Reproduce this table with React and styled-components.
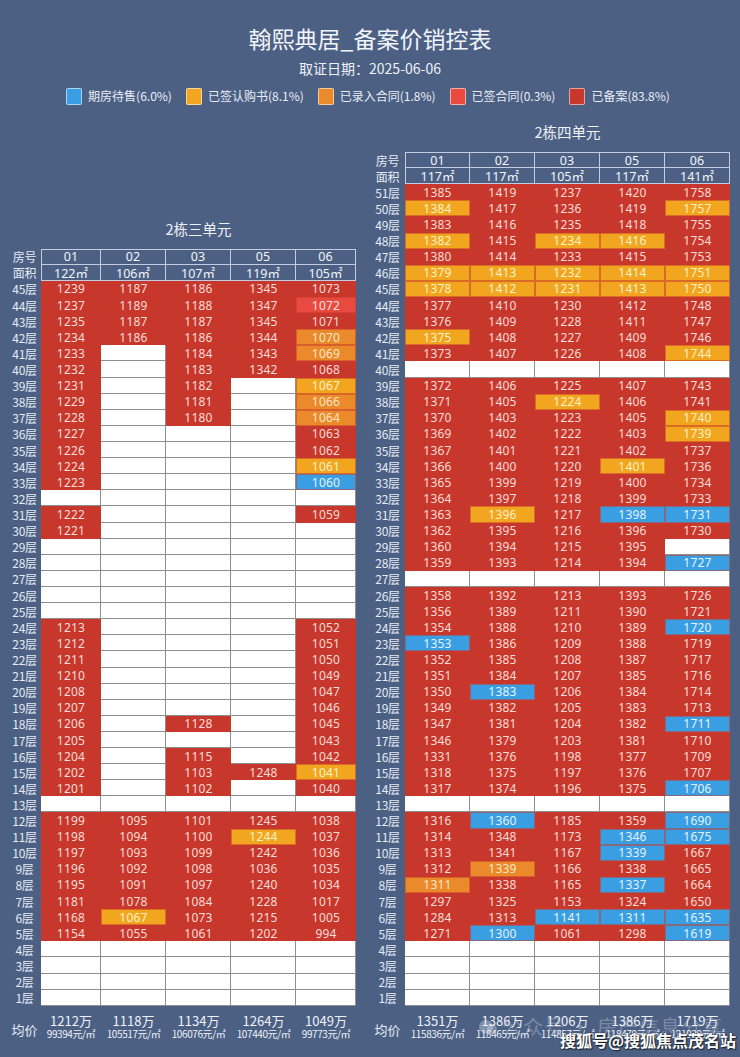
import React from 'react';
import styled, { createGlobalStyle } from 'styled-components';

const GlobalStyle = createGlobalStyle`
  html, body {
    margin: 0;
    padding: 0;
    background: #4c6084;
  }
  body {
    font-family: "Noto Sans", "Noto Sans CJK SC", sans-serif;
  }
`;

const COLORS = {
  sold: '#c8372c',
  sub: '#f2a51f',
  entry: '#ea8a2b',
  signed: '#e94a40',
  avail: '#3a9fe2',
};

const TEXT = {
  sold: '#f8ddd6',
  sub: '#fff3c4',
  entry: '#ffe6c4',
  signed: '#ffe0dc',
  avail: '#e4f2ff',
};

const SUFFIX = { y: 'sub', o: 'entry', r: 'signed', b: 'avail' };

const LEGEND = [
  { key: 'avail', label: '期房待售(6.0%)' },
  { key: 'sub', label: '已签认购书(8.1%)' },
  { key: 'entry', label: '已录入合同(1.8%)' },
  { key: 'signed', label: '已签合同(0.3%)' },
  { key: 'sold', label: '已备案(83.8%)' },
];

// 2栋三单元, 45层 -> 1层
const LEFT = [
  '1239 1187 1186 1345 1073',
  '1237 1189 1188 1347 1072r',
  '1235 1187 1187 1345 1071',
  '1234 1186 1186 1344 1070o',
  '1233 - 1184 1343 1069o',
  '1232 - 1183 1342 1068',
  '1231 - 1182 - 1067y',
  '1229 - 1181 - 1066o',
  '1228 - 1180 - 1064o',
  '1227 - - - 1063',
  '1226 - - - 1062',
  '1224 - - - 1061y',
  '1223 - - - 1060b',
  '- - - - -',
  '1222 - - - 1059',
  '1221 - - - -',
  '- - - - -',
  '- - - - -',
  '- - - - -',
  '- - - - -',
  '- - - - -',
  '1213 - - - 1052',
  '1212 - - - 1051',
  '1211 - - - 1050',
  '1210 - - - 1049',
  '1208 - - - 1047',
  '1207 - - - 1046',
  '1206 - 1128 - 1045',
  '1205 - - - 1043',
  '1204 - 1115 - 1042',
  '1202 - 1103 1248 1041y',
  '1201 - 1102 - 1040',
  '- - - - -',
  '1199 1095 1101 1245 1038',
  '1198 1094 1100 1244y 1037',
  '1197 1093 1099 1242 1036',
  '1196 1092 1098 1036 1035',
  '1195 1091 1097 1240 1034',
  '1181 1078 1084 1228 1017',
  '1168 1067y 1073 1215 1005',
  '1154 1055 1061 1202 994',
  '- - - - -',
  '- - - - -',
  '- - - - -',
  '- - - - -',
];

// 2栋四单元, 51层 -> 1层
const RIGHT = [
  '1385 1419 1237 1420 1758',
  '1384y 1417 1236 1419 1757y',
  '1383 1416 1235 1418 1755',
  '1382y 1415 1234y 1416y 1754',
  '1380 1414 1233 1415 1753',
  '1379y 1413y 1232y 1414y 1751y',
  '1378y 1412y 1231y 1413y 1750y',
  '1377 1410 1230 1412 1748',
  '1376 1409 1228 1411 1747',
  '1375y 1408 1227 1409 1746',
  '1373 1407 1226 1408 1744y',
  '- - - - -',
  '1372 1406 1225 1407 1743',
  '1371 1405 1224y 1406 1741',
  '1370 1403 1223 1405 1740y',
  '1369 1402 1222 1403 1739y',
  '1367 1401 1221 1402 1737',
  '1366 1400 1220 1401y 1736',
  '1365 1399 1219 1400 1734',
  '1364 1397 1218 1399 1733',
  '1363 1396y 1217 1398b 1731b',
  '1362 1395 1216 1396 1730',
  '1360 1394 1215 1395 -',
  '1359 1393 1214 1394 1727b',
  '- - - - -',
  '1358 1392 1213 1393 1726',
  '1356 1389 1211 1390 1721',
  '1354 1388 1210 1389 1720b',
  '1353b 1386 1209 1388 1719',
  '1352 1385 1208 1387 1717',
  '1351 1384 1207 1385 1716',
  '1350 1383b 1206 1384 1714',
  '1349 1382 1205 1383 1713',
  '1347 1381 1204 1382 1711b',
  '1346 1379 1203 1381 1710',
  '1331 1376 1198 1377 1709',
  '1318 1375 1197 1376 1707',
  '1317 1374 1196 1375 1706b',
  '- - - - -',
  '1316 1360b 1185 1359 1690b',
  '1314 1348 1173 1346b 1675b',
  '1313 1341 1167 1339b 1667',
  '1312 1339o 1166 1338 1665',
  '1311o 1338 1165 1337b 1664',
  '1297 1325 1153 1324 1650',
  '1284 1313 1141b 1311b 1635b',
  '1271 1300b 1061 1298 1619b',
  '- - - - -',
  '- - - - -',
  '- - - - -',
  '- - - - -',
];

const BUILDINGS = [
  {
    name: '2栋三单元',
    label: 33,
    widths: [60, 65, 65, 65, 60],
    rooms: ['01', '02', '03', '05', '06'],
    areas: ['122㎡', '106㎡', '107㎡', '119㎡', '105㎡'],
    rows: LEFT,
    avg: [
      ['1212万', '99394元/㎡'],
      ['1118万', '105517元/㎡'],
      ['1134万', '106076元/㎡'],
      ['1264万', '107440元/㎡'],
      ['1049万', '99773元/㎡'],
    ],
  },
  {
    name: '2栋四单元',
    label: 35,
    widths: [65, 65, 65, 65, 65],
    rooms: ['01', '02', '03', '05', '06'],
    areas: ['117㎡', '117㎡', '105㎡', '117㎡', '141㎡'],
    rows: RIGHT,
    avg: [
      ['1351万', '115836元/㎡'],
      ['1386万', '118465元/㎡'],
      ['1206万', '114857元/㎡'],
      ['1386万', '118479元/㎡'],
      ['1719万', '121929元/㎡'],
    ],
  },
];

const parseCell = (token) => {
  if (token === '-') return { status: 'empty', value: '' };
  const last = token[token.length - 1];
  if (SUFFIX[last]) return { status: SUFFIX[last], value: token.slice(0, -1) };
  return { status: 'sold', value: token };
};

const Page = styled.div`
  position: relative;
  width: 740px;
  height: 1057px;
  overflow: hidden;
  background: #4c6084;
  color: #eef2f8;
  padding-top: 23px;
  box-sizing: border-box;
`;

const Header = styled.header`
  display: flex;
  flex-direction: column;
  align-items: center;
`;

const Title = styled.h1`
  margin: 0;
  font-family: "Noto Sans CJK SC", sans-serif;
  font-size: 23px;
  line-height: 30px;
  font-weight: 400;
  color: #f1f4f9;
`;

const DateLine = styled.div`
  margin-top: 5px;
  font-family: "Noto Sans CJK SC", sans-serif;
  font-size: 14px;
  line-height: 20px;
  color: #eef2f8;
`;

const Legend = styled.div`
  display: flex;
  align-items: center;
  gap: 14px;
  margin-top: 9px;
  margin-left: -4px;
`;

const LegendItem = styled.div`
  display: flex;
  align-items: center;
  gap: 6px;
  font-family: "Noto Sans CJK SC", sans-serif;
  font-size: 12px;
  line-height: 18px;
  color: #e8edf5;
`;

const Swatch = styled.span`
  width: 14px;
  height: 15px;
  border-radius: 2px;
  background: ${(p) => COLORS[p.$status]};
  border: 1px solid rgba(255, 255, 255, 0.55);
`;

const Boards = styled.div`
  display: grid;
  grid-template-columns: 348px 360px;
  column-gap: 14px;
  align-items: end;
  padding-left: 8px;
  margin-top: 17px;
`;

const Board = styled.section`
  display: flex;
  flex-direction: column;
`;

const BoardTitle = styled.h2`
  margin: 0 0 10px ${(p) => p.$offset}px;
  text-align: center;
  font-family: "Noto Sans CJK SC", sans-serif;
  font-size: 14.5px;
  line-height: 20px;
  font-weight: 400;
  color: #eef2f8;
`;

const Grid = styled.div`
  display: grid;
  grid-template-columns: ${(p) => p.$cols};
  grid-auto-rows: 16.12px;
`;

const FloorLabel = styled.div`
  display: flex;
  align-items: center;
  justify-content: center;
  font-family: "Noto Sans CJK SC", sans-serif;
  font-size: 12px;
  color: #e6ebf4;
  letter-spacing: -0.3px;
`;

const HeadCell = styled.div`
  display: flex;
  align-items: center;
  justify-content: center;
  box-sizing: border-box;
  font-size: 12.5px;
  color: #f2f5fa;
  border-right: 1px solid #c3cce0;
  border-bottom: 1px solid #c3cce0;
  border-left: ${(p) => (p.$lead ? '1px solid #c3cce0' : 'none')};
  border-top: ${(p) => (p.$top ? '1px solid #c3cce0' : 'none')};
`;

const Cell = styled.div`
  display: flex;
  align-items: center;
  justify-content: center;
  box-sizing: border-box;
  font-size: 12px;
  letter-spacing: 0.2px;
  background: ${(p) => (p.$status === 'empty' ? '#ffffff' : COLORS[p.$status])};
  color: ${(p) => TEXT[p.$status] || 'transparent'};
  box-shadow: ${(p) => {
    if (p.$status === 'empty') return 'inset -1px -1px 0 #8e8e8e';
    if (p.$status === 'sold') return 'none';
    return 'inset 0 0 0 1px rgba(196, 60, 44, 0.55)';
  }};
`;

const AvgRow = styled.div`
  display: grid;
  grid-template-columns: ${(p) => p.$cols};
  padding-top: 8px;
  height: 40px;
  box-sizing: border-box;
`;

const AvgLabel = styled.div`
  display: flex;
  align-items: center;
  justify-content: center;
  font-family: "Noto Sans CJK SC", sans-serif;
  font-size: 13px;
  color: #e6ebf4;
`;

const AvgCell = styled.div`
  display: flex;
  flex-direction: column;
  align-items: center;
  font-family: "Noto Sans CJK SC", sans-serif;
  color: #eef2f8;
`;

const AvgTotal = styled.span`
  font-size: 13px;
  line-height: 14px;
`;

const AvgUnit = styled.span`
  font-size: 10px;
  line-height: 12px;
  letter-spacing: -0.4px;
  white-space: nowrap;
`;

const Watermark = styled.div`
  position: absolute;
  left: 478px;
  top: 1014px;
  display: flex;
  align-items: center;
  gap: 4px;
  white-space: nowrap;
  font-family: "Noto Sans CJK SC", sans-serif;
  font-size: 20px;
  line-height: 26px;
  letter-spacing: 1px;
  color: rgba(235, 240, 248, 0.3);
  pointer-events: none;
`;

const Stamp = styled.div`
  position: absolute;
  left: 560px;
  top: 1029px;
  font-family: "Noto Sans CJK SC", sans-serif;
  font-size: 16px;
  line-height: 22px;
  font-weight: 700;
  color: #ffffff;
  text-shadow: 0 0 2px rgba(0, 0, 0, 0.7), 1px 1px 1px rgba(0, 0, 0, 0.6);
  white-space: nowrap;
`;

const BuildingBoard = ({ data }) => {
  const cols = [data.label, ...data.widths].map((w) => `${w}px`).join(' ');
  const total = data.rows.length;
  return (
    <Board>
      <BoardTitle $offset={data.label}>{data.name}</BoardTitle>
      <Grid $cols={cols}>
        <FloorLabel>房号</FloorLabel>
        {data.rooms.map((r, i) => (
          <HeadCell key={`r${r}`} $top $lead={i === 0}>{r}</HeadCell>
        ))}
        <FloorLabel>面积</FloorLabel>
        {data.areas.map((a, i) => (
          <HeadCell key={`a${i}`} $lead={i === 0}>{a}</HeadCell>
        ))}
        {data.rows.map((row, idx) => {
          const floor = total - idx;
          return (
            <React.Fragment key={floor}>
              <FloorLabel>{floor}层</FloorLabel>
              {row.split(' ').map((t, c) => {
                const cell = parseCell(t);
                return (
                  <Cell key={c} $status={cell.status}>{cell.value}</Cell>
                );
              })}
            </React.Fragment>
          );
        })}
      </Grid>
      <AvgRow $cols={cols}>
        <AvgLabel>均价</AvgLabel>
        {data.avg.map(([t, u], i) => (
          <AvgCell key={i}>
            <AvgTotal>{t}</AvgTotal>
            <AvgUnit>{u}</AvgUnit>
          </AvgCell>
        ))}
      </AvgRow>
    </Board>
  );
};

export default function App() {
  return (
    <Page>
      <GlobalStyle />
      <Header>
        <Title>翰熙典居_备案价销控表</Title>
        <DateLine>取证日期：2025-06-06</DateLine>
        <Legend>
          {LEGEND.map((l) => (
            <LegendItem key={l.key}>
              <Swatch $status={l.key} />
              {l.label}
            </LegendItem>
          ))}
        </Legend>
      </Header>
      <Boards>
        {BUILDINGS.map((b) => (
          <BuildingBoard key={b.name} data={b} />
        ))}
      </Boards>
      <Watermark>
        <svg width="20" height="20" viewBox="0 0 20 20">
          <circle cx="8" cy="10" r="7" fill="rgba(235,240,248,0.35)" />
          <circle cx="14" cy="12" r="5" fill="rgba(235,240,248,0.3)" />
        </svg>
        公众号 · 房产信息分享
      </Watermark>
      <Stamp>搜狐号@搜狐焦点茂名站</Stamp>
    </Page>
  );
}
